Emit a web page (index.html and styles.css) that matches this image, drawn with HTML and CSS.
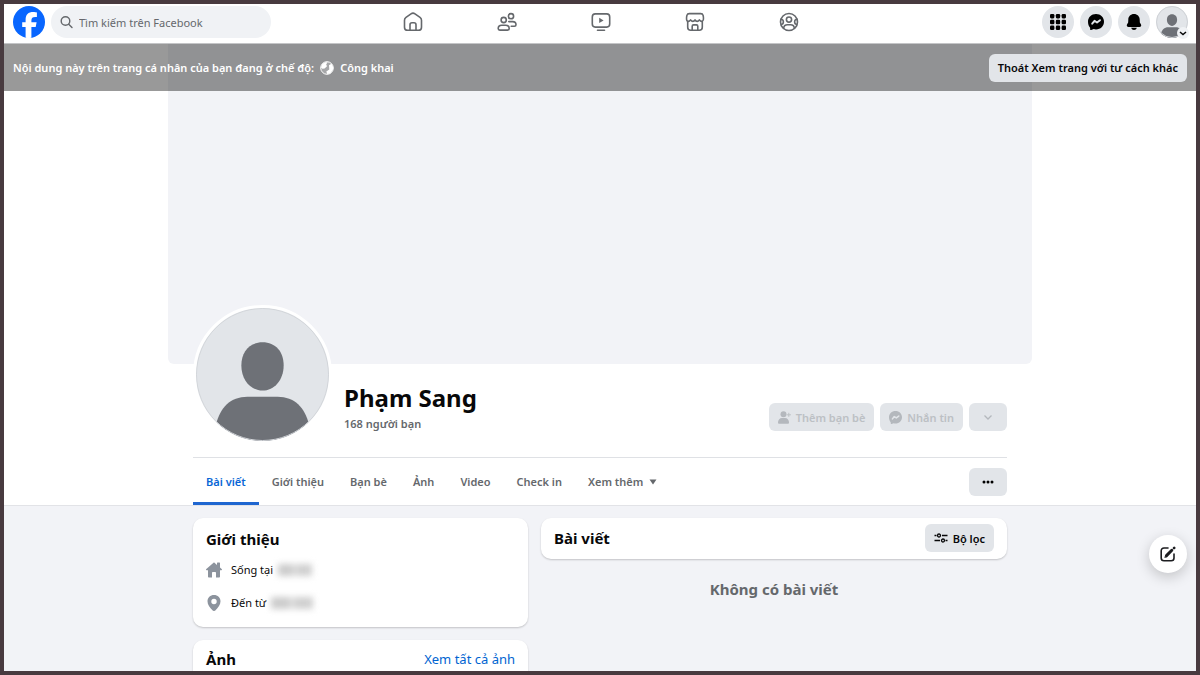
FILE: index.html
```html
<!DOCTYPE html>
<html lang="vi">
<head>
    <meta charset="UTF-8">
    <meta name="viewport" content="width=device-width, initial-scale=1.0">
    <title>Phạm Sang | Facebook</title>
    <link rel="stylesheet" href="styles.css">
</head>
<body>
    <header class="topbar">
        <div class="topbar-left">
            <a href="#" class="logo" aria-label="Facebook">
                <svg viewBox="0 0 32 32" width="32" height="32">
                    <circle cx="16" cy="16" r="16" fill="#0866ff"/>
                    <path d="M12.6 31.7V21.1H9.2v-4.9h3.4v-2.1c0-5.5 2.5-8 7.9-8 1 0 2.6.2 3.4.4v4.5c-.4 0-1-.1-1.8-.1-2.6 0-3.7 1-3.7 3.6v1.7h5.2l-.9 4.9h-4.3v10.6c-1.900.2-3.900.3-5.800 0z" fill="#fff"/>
                </svg>
            </a>
            <label class="search">
                <svg viewBox="0 0 14 14" width="14" height="14" fill="none" stroke="#65686c" stroke-width="1.400" stroke-linecap="round">
                    <circle cx="5.500" cy="6" r="4.300"/>
                    <path d="M8.700 9.200L12 12.500"/>
                </svg>
                <input type="search" placeholder="Tìm kiếm trên Facebook" aria-label="Tìm kiếm trên Facebook">
            </label>
        </div>

        <nav class="main-nav">
            <a href="#" aria-label="Trang chủ">
                <svg viewBox="0 0 20 20" width="20" height="20">
                    <path d="M1.500 8.300c0-1.200.5-2.200 1.500-2.900l5-3.600c1.200-.8 2.800-.8 4 0l5 3.600c1 .7 1.500 1.700 1.500 2.900v6.900c0 1.800-1.300 3.100-3.100 3.100H4.600c-1.800 0-3.100-1.300-3.100-3.100z"/>
                    <path d="M7 18.200v-5.400c0-1.100.9-2 2-2h2c1.100 0 2 .9 2 2v5.400"/>
                </svg>
            </a>
            <a href="#" aria-label="Bạn bè">
                <svg viewBox="0 0 20 20" width="20" height="20">
                    <circle cx="6.700" cy="8" r="2.600"/>
                    <circle cx="14" cy="4.200" r="2.600"/>
                    <path d="M1.200 16.500c0-2 1.500-3.300 3.500-3.300h4c2 0 3.500 1.300 3.500 3.300 0 .9-.7 1.600-1.600 1.600H2.800c-.9 0-1.600-.7-1.600-1.600z"/>
                    <path d="M11.800 9.600h3.800c1.900 0 3.400 1.300 3.400 3.200 0 .9-.7 1.500-1.600 1.500h-3.200"/>
                </svg>
            </a>
            <a href="#" aria-label="Video">
                <svg viewBox="0 0 20 20" width="20" height="20">
                    <rect x="1.300" y="1.900" width="17.400" height="13.200" rx="3"/>
                    <path d="M6.500 18.200h7"/>
                    <path class="solid" d="M8.200 5.700v5.400l4.400-2.700z"/>
                </svg>
            </a>
            <a href="#" aria-label="Marketplace">
                <svg viewBox="0 0 20 20" width="20" height="20">
                    <path d="M2.700 9.500v5.700c0 1.700 1.300 3 3 3h8.600c1.700 0 3-1.300 3-3V9.500"/>
                    <path d="M4.300 1.600h11.400c1.200 0 2.100.7 2.400 1.800.6 2.300.8 6-1.400 6-1.200 0-1.800-.8-2.300-1.500-.6.900-1.300 1.500-2.200 1.500s-1.700-.6-2.200-1.500c-.5.900-1.300 1.500-2.200 1.500s-1.600-.6-2.200-1.500c-.5.700-1.100 1.500-2.300 1.500-2.200 0-2-3.700-1.400-6 .3-1.100 1.200-1.800 2.400-1.800z"/>
                    <path d="M7.200 18v-3.800c0-.8.600-1.300 1.300-1.300h3c.7 0 1.300.5 1.300 1.300V18"/>
                </svg>
            </a>
            <a href="#" aria-label="Nhóm">
                <svg viewBox="0 0 20 20" width="20" height="20">
                    <circle cx="10" cy="10" r="8.500"/>
                    <circle cx="10" cy="7.600" r="2.600"/>
                    <path d="M4.600 16.400c.2-2.500 1.900-3.700 3.800-3.700h3.200c1.900 0 3.600 1.200 3.800 3.700"/>
                    <path d="M2.100 7.300c3 .2 3 4.800.3 5.200M17.900 7.300c-3 .2-3 4.800-.3 5.200"/>
                </svg>
            </a>
        </nav>

        <div class="topbar-right">
            <button class="round-btn" aria-label="Menu">
                <svg viewBox="0 0 16 16" width="16" height="16">
                    <rect x="0" y="0" width="4.400" height="4.400" rx="1.300"/>
                    <rect x="5.800" y="0" width="4.400" height="4.400" rx="1.300"/>
                    <rect x="11.600" y="0" width="4.400" height="4.400" rx="1.300"/>
                    <rect x="0" y="5.800" width="4.400" height="4.400" rx="1.300"/>
                    <rect x="5.800" y="5.800" width="4.400" height="4.400" rx="1.300"/>
                    <rect x="11.600" y="5.800" width="4.400" height="4.400" rx="1.300"/>
                    <rect x="0" y="11.600" width="4.400" height="4.400" rx="1.300"/>
                    <rect x="5.800" y="11.600" width="4.400" height="4.400" rx="1.300"/>
                    <rect x="11.600" y="11.600" width="4.400" height="4.400" rx="1.300"/>
                </svg>
            </button>
            <button class="round-btn" aria-label="Messenger">
                <svg viewBox="0 0 16 16" width="16" height="16">
                    <path d="M8 0c4.600 0 8 3.300 8 7.700s-3.400 7.700-8 7.700c-.8 0-1.600-.1-2.300-.3L3.200 16c-.5.200-1 0-1-.6l-.1-1.600C.8 12.300 0 10.200 0 7.700 0 3.300 3.400 0 8 0z"/>
                    <path d="M4.200 9.700l2.300-2.900 2.500 1.700 3-2.300" fill="none" stroke="#e2e5e9" stroke-width="1.900" stroke-linecap="round" stroke-linejoin="round"/>
                </svg>
            </button>
            <button class="round-btn" aria-label="Thông báo">
                <svg viewBox="0 0 16 16" width="16" height="16">
                    <path d="M8 0c3.300 0 5.600 2.400 5.700 5.500l.1 2.400c0 .5.200 1 .5 1.400l.6 1c.8 1.300.1 2.700-1.400 2.700h-11c-1.500 0-2.200-1.400-1.400-2.700l.6-1c.3-.4.5-.9.500-1.400l.1-2.400C2.400 2.400 4.700 0 8 0z"/>
                    <path d="M5.200 13.800h5.600C10.400 15.200 9.300 16 8 16s-2.400-.8-2.800-2.200z"/>
                </svg>
            </button>
            <button class="round-btn account-btn" aria-label="Tài khoản">
                <svg viewBox="0 0 132 132" width="32" height="32">
                    <use href="#person"/>
                </svg>
                <span class="account-arrow">
                    <svg viewBox="0 0 8 8" width="8" height="8"><path d="M1 3l3 2.500L7 3" fill="none" stroke="#080809" stroke-width="1.500"/></svg>
                </span>
            </button>
        </div>
    </header>

    <main class="page">
        <div class="view-as">
            <p>Nội dung này trên trang cá nhân của bạn đang ở chế độ:
                <svg viewBox="0 0 14 14" width="14" height="14">
                    <circle cx="7" cy="7" r="6.300" fill="#a6a7a9" stroke="#fff" stroke-width="1"/>
                    <path d="M2 3.500C3.500 1.500 5.500 1 7.500 1.200L6.200 3.600 7 5.200 4.600 7.600 2.400 7.800 1 6.600zM9 4.200l2.400-1.500C13 4.500 13.500 7 12.800 9l-2.700 3.400-2.900.7-.9-2.700 3-2z" fill="#fff"/>
                </svg>
                Công khai</p>
            <button class="btn exit-btn">Thoát Xem trang với tư cách khác</button>
        </div>

        <section class="profile">
            <div class="profile-wrap">
                <div class="cover"></div>
                <div class="profile-inner">
                    <div class="profile-row">
                        <div class="avatar">
                            <svg viewBox="0 0 132 132">
                                <g id="person" fill="#6e7177">
                                    <path d="M66 34c13 0 21 9.500 21 23 0 14.500-9.500 25-21 25s-21-10.500-21-25c0-13.500 8-23 21-23z"/>
                                    <path d="M51 88h30c17 0 27 11 31 27v17H20v-17c4-16 14-27 31-27z"/>
                                </g>
                            </svg>
                        </div>
                        <div class="profile-name">
                            <h1>Phạm Sang</h1>
                            <p>168 người bạn</p>
                        </div>
                        <div class="profile-actions">
                            <button class="btn" disabled>
                                <svg viewBox="0 0 13 13" width="13" height="13">
                                    <circle cx="5.500" cy="3.200" r="3"/>
                                    <path d="M0 11.500C0 8.800 1.800 7 4 7h3c2.200 0 4 1.800 4 4.500 0 .8-.5 1.300-1.200 1.300H1.200C.5 12.800 0 12.300 0 11.500z"/>
                                    <path d="M10.800 1.800v4M8.900 3.800h4" stroke="#bcc0c4" stroke-width="1"/>
                                </svg>
                                Thêm bạn bè
                            </button>
                            <button class="btn" disabled>
                                <svg viewBox="0 0 16 16" width="13" height="13">
                                    <path d="M8 0c4.600 0 8 3.300 8 7.700s-3.400 7.700-8 7.700c-.8 0-1.600-.1-2.300-.3L3.200 16c-.5.200-1 0-1-.6l-.1-1.600C.8 12.300 0 10.200 0 7.700 0 3.300 3.400 0 8 0z"/>
                                    <path d="M4.200 9.700l2.300-2.900 2.500 1.700 3-2.300" fill="none" stroke="#e2e5e9" stroke-width="1.900" stroke-linecap="round" stroke-linejoin="round"/>
                                </svg>
                                Nhắn tin
                            </button>
                            <button class="btn icon-btn" disabled aria-label="Mở rộng">
                                <svg viewBox="0 0 12 12" width="12" height="12"><path d="M2.500 4.500L6 8l3.500-3.500" fill="none" stroke="#b4b8bd" stroke-width="1.300"/></svg>
                            </button>
                        </div>
                    </div>

                    <div class="tab-row">
                        <nav class="tabs">
                            <a href="#" class="active">Bài viết</a>
                            <a href="#">Giới thiệu</a>
                            <a href="#">Bạn bè</a>
                            <a href="#">Ảnh</a>
                            <a href="#">Video</a>
                            <a href="#">Check in</a>
                            <a href="#">Xem thêm
                                <svg viewBox="0 0 8 6" width="8" height="6"><path d="M0.500 0.500h7L4 5.500z" fill="#65686c"/></svg>
                            </a>
                        </nav>
                        <button class="btn icon-btn" aria-label="Xem thêm tùy chọn">
                            <svg viewBox="0 0 12 4" width="12" height="4">
                                <circle cx="2" cy="2" r="1.500"/>
                                <circle cx="6" cy="2" r="1.500"/>
                                <circle cx="10" cy="2" r="1.500"/>
                            </svg>
                        </button>
                    </div>
                </div>
            </div>
        </section>

        <div class="content">
            <div class="column">
                <section class="card">
                    <h2>Giới thiệu</h2>
                    <ul class="intro">
                        <li>
                            <svg viewBox="0 0 16 16" width="16" height="16"><path d="M7.500.8c.3-.3.700-.3 1 0L11 2.900V1c0-.3.200-.5.500-.5h2c.3 0 .5.200.5.500v4.500l1.700 1.600c.5.500.3 1.100-.3 1.100H14v6.500c0 .5-.3.800-.8.800H10v-4.700c0-.5-.3-.8-.8-.8H6.800c-.5 0-.8.300-.8.800v4.700H2.800c-.5 0-.8-.3-.8-.8V8.200H.6C0 8.200-.2 7.600.3 7.100z"/></svg>
                            <span>Sống tại</span>
                            <span class="hidden-place"></span>
                        </li>
                        <li>
                            <svg viewBox="0 0 16 16" width="16" height="16"><path fill-rule="evenodd" d="M8 0c3.700 0 6.500 2.700 6.500 6.300 0 3.300-2.200 6.400-5.200 9.200-.8.700-1.800.7-2.600 0C3.700 12.700 1.500 9.600 1.500 6.300 1.500 2.700 4.300 0 8 0zm0 3.800a2.700 2.700 0 1 0 0 5.400 2.700 2.700 0 0 0 0-5.400z"/></svg>
                            <span>Đến từ</span>
                            <span class="hidden-place wide"></span>
                        </li>
                    </ul>
                </section>
                <section class="card card-head">
                    <h2>Ảnh</h2>
                    <a href="#">Xem tất cả ảnh</a>
                </section>
            </div>

            <div class="column">
                <section class="card card-head posts-head">
                    <h2>Bài viết</h2>
                    <button class="btn">
                        <svg viewBox="0 0 14 12" width="14" height="12" fill="none" stroke="#080809" stroke-width="1.300">
                            <path d="M0.500 3.500h2M8 3.500h5.500M0.500 8.500h5.500M11.500 8.500h2"/>
                            <circle cx="5" cy="3.500" r="1.500"/>
                            <circle cx="9" cy="8.500" r="1.500"/>
                        </svg>
                        Bộ lọc
                    </button>
                </section>
                <p class="no-posts">Không có bài viết</p>
            </div>
        </div>
    </main>

    <button class="compose-btn" aria-label="Tin nhắn mới">
        <svg viewBox="0 0 16 16" width="16" height="16" fill="none" stroke="#1c1d20" stroke-linecap="round">
            <path d="M8 2H4C2.300 2 1.200 3.100 1.200 4.800v7.200c0 1.700 1.100 2.800 2.800 2.800h7.200c1.700 0 2.800-1.100 2.800-2.800V8" stroke-width="1.600"/>
            <path d="M6.500 9.600l5.300-5.300" stroke-width="3"/>
            <path d="M5 11.200l1.500-.5" stroke-width="1.300"/>
            <path d="M14 2.100l.2-.2" stroke-width="2.600"/>
        </svg>
    </button>
</body>
</html>
```

FILE: styles.css
```css
* {
    margin: 0;
    padding: 0;
    box-sizing: border-box;
    font-family: "Noto Sans", "Open Sans", sans-serif;
}

body {
    height: 100vh;
    display: flex;
    flex-direction: column;
    overflow: hidden;
    border: 4px solid #483a3f;
    background: #f2f3f7;
    color: #080809;
    font-size: 11px;
    line-height: 16px;
}

a {
    color: inherit;
    text-decoration: none;
}

button {
    border: none;
    cursor: pointer;
}

svg {
    flex-shrink: 0;
}

h2 {
    font-size: 15px;
    line-height: 20px;
    font-weight: 700;
}

/* Top bar */
.topbar {
    display: grid;
    grid-template-columns: 1fr auto 1fr;
    align-items: center;
    height: 40px;
    flex-shrink: 0;
    padding: 0 8px 3px 9px;
    background: #fff;
    border-bottom: 1px solid #c4c5c7;
}

.topbar-left,
.topbar-right {
    display: flex;
    align-items: center;
    gap: 6px;
}

.topbar-right {
    justify-content: flex-end;
}

.logo,
.logo svg {
    display: block;
}

.search {
    display: flex;
    align-items: center;
    gap: 5px;
    width: 220px;
    height: 32px;
    padding: 0 9px;
    border-radius: 16px;
    background: #f0f2f5;
}

.search input {
    flex: 1;
    min-width: 0;
    border: none;
    outline: none;
    background: none;
    font-size: 11px;
}

.search input::placeholder {
    color: #65686c;
}

.main-nav {
    display: flex;
}

.main-nav a {
    display: flex;
    justify-content: center;
    width: 94px;
}

.main-nav svg {
    fill: none;
    stroke: #65686c;
    stroke-width: 1.6;
    stroke-linecap: round;
    stroke-linejoin: round;
}

.main-nav .solid {
    fill: #65686c;
    stroke: none;
}

.round-btn {
    position: relative;
    display: flex;
    align-items: center;
    justify-content: center;
    width: 32px;
    height: 32px;
    border-radius: 50%;
    background: #e2e5e9;
}

.account-btn > svg {
    border-radius: 50%;
    outline: 1px solid #d0d3d7;
    outline-offset: -1px;
}

.account-arrow {
    position: absolute;
    right: -1px;
    bottom: -1px;
    display: flex;
    align-items: center;
    justify-content: center;
    width: 12px;
    height: 12px;
    border-radius: 50%;
    background: #f0f2f5;
}

/* Page */
.page {
    position: relative;
    flex: 1;
    min-height: 0;
    overflow: hidden;
}

.view-as {
    position: absolute;
    top: 0;
    left: 0;
    right: 0;
    display: flex;
    align-items: center;
    justify-content: space-between;
    height: 47px;
    padding: 0 9px;
    background: rgba(0, 0, 0, 0.4);
    color: #fff;
    font-weight: 600;
}

.view-as p {
    display: flex;
    align-items: center;
    gap: 6px;
}

.btn {
    display: flex;
    align-items: center;
    justify-content: center;
    gap: 5px;
    height: 28px;
    padding: 0 9px;
    border-radius: 6px;
    background: #e2e5e9;
    color: #080809;
    font-size: 11px;
    font-weight: 600;
}

.btn:disabled {
    color: #bcc0c4;
    fill: #b4b8bd;
    cursor: default;
}

.icon-btn {
    width: 38px;
}

.profile {
    background: #fff;
    border-bottom: 1px solid #e2e3e7;
}

.profile-wrap {
    max-width: 864px;
    margin: 0 auto;
}

.cover {
    height: 320px;
    border-radius: 0 0 6px 6px;
    background: #f2f3f7;
}

.profile-inner {
    padding: 0 25px;
}

.profile-row {
    display: flex;
    height: 93px;
}

.avatar {
    width: 139px;
    height: 139px;
    margin-top: -59px;
    border: 3px solid #fff;
    border-radius: 50%;
    overflow: hidden;
    background: #e2e5e9;
}

.avatar svg {
    display: block;
    border-radius: 50%;
    outline: 1px solid #d2d5d9;
    outline-offset: -1px;
}

.profile-name {
    flex: 1;
    padding: 18px 0 0 12px;
    color: #65686c;
    font-weight: 600;
}

.profile-name h1 {
    margin-bottom: 2px;
    color: #080809;
    font-size: 24px;
    line-height: 32px;
    font-weight: 700;
}

.profile-actions {
    display: flex;
    gap: 6px;
    padding-top: 39px;
}

.tab-row {
    display: flex;
    align-items: center;
    justify-content: space-between;
    border-top: 1px solid #dfe1e5;
}

.tabs {
    display: flex;
    color: #65686c;
    font-weight: 600;
}

.tabs a {
    display: flex;
    align-items: center;
    gap: 6px;
    height: 47px;
    padding: 0 13px;
    border-bottom: 3px solid transparent;
    border-top: 3px solid transparent;
}

.tabs .active {
    color: #0866d6;
    border-bottom-color: #1f66d0;
}

/* Cards */
.content {
    display: grid;
    grid-template-columns: 335fr 466fr;
    gap: 13px;
    max-width: 864px;
    margin: 0 auto;
    padding: 12px 25px;
}

.column {
    display: flex;
    flex-direction: column;
    gap: 13px;
}

.card {
    padding: 11px 13px 16px;
    border-radius: 10px;
    background: #fff;
    box-shadow: 0 1px 2px rgba(0, 0, 0, 0.2);
}

.intro {
    list-style: none;
    margin-top: 13px;
}

.intro li {
    display: flex;
    align-items: center;
}

.intro li + li {
    margin-top: 17px;
}

.intro svg {
    margin-right: 9px;
    fill: #8c939d;
}

.hidden-place {
    width: 34px;
    height: 12px;
    margin-left: 5px;
    background: linear-gradient(90deg, #ccc 40%, #e4e4e4 50%, #d0d0d0 60%);
    filter: blur(3px);
}

.hidden-place.wide {
    width: 42px;
}

.card-head {
    display: flex;
    align-items: center;
    justify-content: space-between;
    padding-top: 9px;
}

.card-head a {
    color: #0064d1;
    font-size: 13px;
    line-height: 20px;
}

.posts-head {
    padding: 6px 13px 7px;
}

.no-posts {
    color: #65686c;
    font-size: 15px;
    line-height: 20px;
    font-weight: 700;
    text-align: center;
    margin-top: 7px;
}

/* Floating button */
.compose-btn {
    position: fixed;
    right: 13px;
    bottom: 102px;
    display: flex;
    align-items: center;
    justify-content: center;
    width: 38px;
    height: 38px;
    border-radius: 50%;
    background: #fff;
    box-shadow: 0 4px 14px rgba(0, 0, 0, 0.2);
}
```
